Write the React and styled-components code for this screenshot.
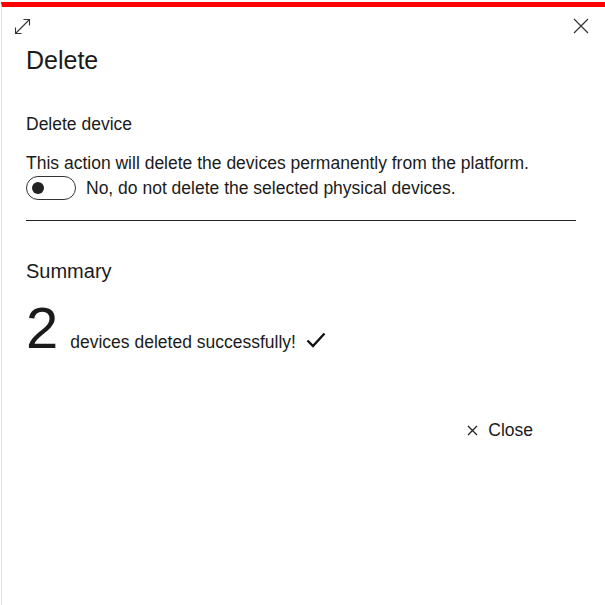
import React, { useState } from 'react';
import styled, { createGlobalStyle } from 'styled-components';

const GlobalStyle = createGlobalStyle`
  * { box-sizing: border-box; }
  html, body { margin: 0; padding: 0; background: #fff; }
  body { font-family: "Liberation Sans", Arial, sans-serif; color: #1b1b1b; }
`;

const Panel = styled.div`
  width: 605px;
  height: 605px;
  border-top: 5px solid #ff0000;
  margin-top: 2px;
  border-left: 1px solid #e1e1e1;
  margin-left: 1px;
  display: flex;
  flex-direction: column;
`;

const TopBar = styled.div`
  display: flex;
  justify-content: space-between;
  align-items: flex-start;
  padding: 10px 16px 0 11px;
  height: 38px;
`;

const IconButton = styled.button`
  border: none;
  background: none;
  padding: 0;
  width: 18px;
  height: 18px;
  display: flex;
  align-items: center;
  justify-content: center;
  cursor: pointer;
  color: #333;
`;

const Body = styled.div`
  padding: 0 27px 0 24px;
  display: flex;
  flex-direction: column;
`;

const Title = styled.h1`
  margin: 0;
  font-size: 25px;
  font-weight: 400;
  line-height: 30px;
`;

const Label = styled.div`
  margin-top: 38px;
  font-size: 17.5px;
  line-height: 22px;
`;

const Text = styled.p`
  margin: 17px 0 0;
  font-size: 17.5px;
  line-height: 22px;
`;

const ToggleRow = styled.label`
  display: flex;
  align-items: center;
  gap: 10px;
  margin-top: 2px;
  font-size: 17.5px;
  line-height: 22px;
  cursor: pointer;
`;

const Track = styled.span`
  width: 50px;
  height: 24px;
  border: 1px solid #333;
  border-radius: 12px;
  display: flex;
  align-items: center;
  padding: 0 5px;
  justify-content: ${p => (p.$on ? 'flex-end' : 'flex-start')};
  background: ${p => (p.$on ? '#333' : '#fff')};
`;

const Knob = styled.span`
  width: 12px;
  height: 12px;
  border-radius: 50%;
  background: ${p => (p.$on ? '#fff' : '#222')};
`;

const Divider = styled.hr`
  margin: 20px 0 0;
  border: none;
  border-top: 1px solid #222;
  width: 550px;
`;

const Summary = styled.h2`
  margin: 38px 0 0;
  font-size: 20px;
  font-weight: 400;
  line-height: 24px;
`;

const ResultRow = styled.div`
  display: flex;
  align-items: baseline;
  gap: 12px;
  margin-top: 13px;
`;

const Count = styled.span`
  font-size: 58px;
  line-height: 64px;
`;

const ResultText = styled.span`
  font-size: 17.5px;
  display: flex;
  align-items: baseline;
  gap: 10px;
`;

const Footer = styled.div`
  display: flex;
  justify-content: flex-end;
  padding-right: 46px;
  margin-top: 60px;
`;

const CloseButton = styled.button`
  border: none;
  background: none;
  font-family: inherit;
  font-size: 17.5px;
  color: #1b1b1b;
  display: flex;
  align-items: center;
  gap: 10px;
  cursor: pointer;
  padding: 0;
`;

const App = () => {
  const [on, setOn] = useState(false);
  return (
    <>
      <GlobalStyle />
      <Panel>
        <TopBar>
          <IconButton aria-label="Expand">
            <svg width="17" height="17" viewBox="0 0 17 17" fill="none" stroke="#333" strokeWidth="1.1">
              <path d="M1.5 15.5 L15.5 1.5 M9.5 1.5 H15.5 V7.5 M1.5 9.5 V15.5 H7.5" />
            </svg>
          </IconButton>
          <IconButton aria-label="Close panel">
            <svg width="16" height="16" viewBox="0 0 16 16" fill="none" stroke="#333" strokeWidth="1.2">
              <path d="M1 1 L15 15 M15 1 L1 15" />
            </svg>
          </IconButton>
        </TopBar>
        <Body>
          <Title>Delete</Title>
          <Label>Delete device</Label>
          <Text>This action will delete the devices permanently from the platform.</Text>
          <ToggleRow onClick={() => setOn(!on)}>
            <Track $on={on}>
              <Knob $on={on} />
            </Track>
            No, do not delete the selected physical devices.
          </ToggleRow>
          <Divider />
          <Summary>Summary</Summary>
          <ResultRow>
            <Count>2</Count>
            <ResultText>
              devices deleted successfully!
              <svg width="20" height="16" viewBox="0 0 20 16" fill="none" stroke="#111" strokeWidth="2.4">
                <path d="M1.5 8.5 L7 14 L18.5 1.5" />
              </svg>
            </ResultText>
          </ResultRow>
          <Footer>
            <CloseButton>
              <svg width="11" height="11" viewBox="0 0 11 11" fill="none" stroke="#222" strokeWidth="1.3">
                <path d="M1 1 L10 10 M10 1 L1 10" />
              </svg>
              Close
            </CloseButton>
          </Footer>
        </Body>
      </Panel>
    </>
  );
};

export default App;
